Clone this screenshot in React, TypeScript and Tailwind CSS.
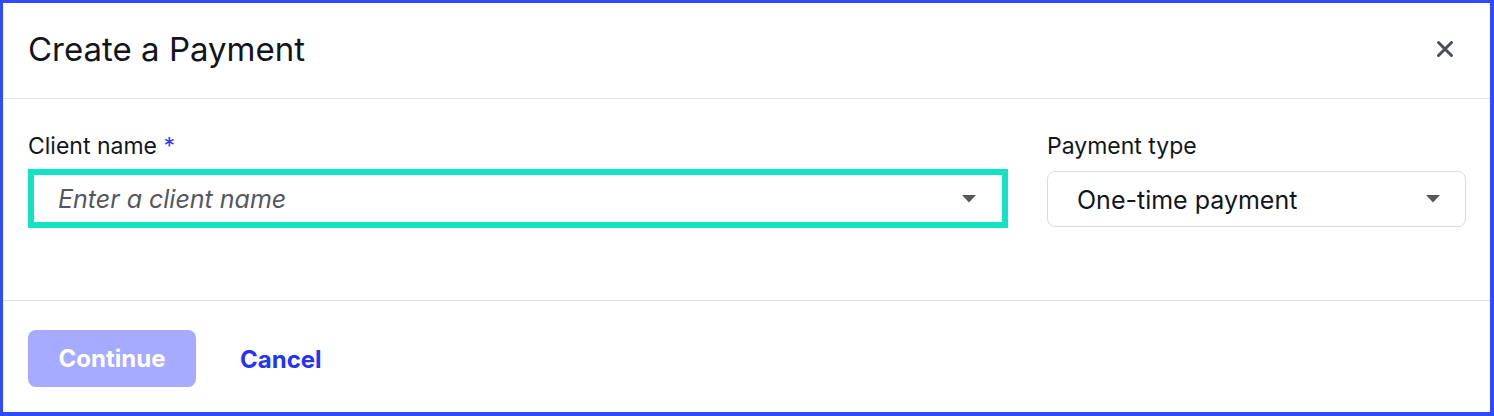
function Caret() {
  return (
    <svg width="14" height="8" viewBox="0 0 14 8" className="shrink-0">
      <path d="M0 0h14L7 7.5z" fill="#55565c" />
    </svg>
  );
}

export default function App() {
  return (
    <div
      className="flex h-[416px] w-full flex-col border-[3px] border-r-4 border-b-4 border-[#2e4bff] bg-white text-[#12161c]"
      style={{ fontFamily: "Inter, 'Noto Sans', sans-serif" }}
    >
      <header className="flex h-[96px] items-center justify-between border-b border-[#e1e1e3] pb-[3px] pl-[25px] pr-[32px]">
        <h1 className="text-[33px] font-normal leading-[40px]">Create a Payment</h1>
        <button aria-label="Close" className="p-1">
          <svg width="18" height="18" viewBox="0 0 18 18">
            <path
              d="M2.5 2.5l13 13M15.5 2.5l-13 13"
              stroke="#4a4e56"
              strokeWidth="3"
              strokeLinecap="round"
            />
          </svg>
        </button>
      </header>

      <div className="flex flex-1 gap-[39px] pl-[25px] pr-[24px] pt-[32px]">
        <div className="flex flex-1 flex-col">
          <label className="text-[23px] leading-[30px]">
            Client name <span className="text-[#2e3bff]">*</span>
          </label>
          <div className="mt-[8px] flex h-[59px] items-center justify-between border-[6px] border-[#12e3c5] pl-[24px] pr-[26px]">
            <span className="pt-[3px] text-[25px] italic text-[#55565e]">Enter a client name</span>
            <Caret />
          </div>
        </div>
        <div className="flex w-[419px] flex-col">
          <label className="text-[23px] leading-[30px]">Payment type</label>
          <div className="mt-[10px] flex h-[56px] items-center justify-between rounded-lg border border-[#dcdcdf] pl-[29px] pr-[25px]">
            <span className="pt-[3px] text-[25px]">One-time payment</span>
            <Caret />
          </div>
        </div>
      </div>

      <footer className="flex h-[112px] items-start gap-[44px] border-t border-[#e1e1e3] pl-[25px] pt-[29px]">
        <button className="h-[57px] w-[168px] rounded-lg bg-[#a6abff] text-[24px] font-bold text-white">
          Continue
        </button>
        <button className="mt-[12px] text-[24px] font-bold text-[#2433f5]">Cancel</button>
      </footer>
    </div>
  );
}
